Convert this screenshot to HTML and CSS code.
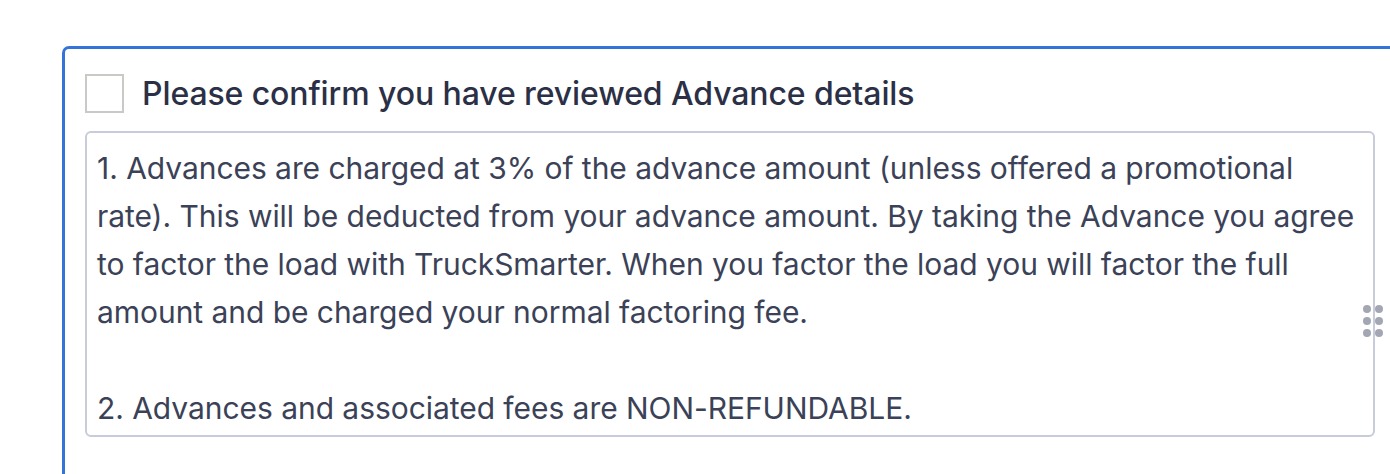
FILE: index.html
```html
<!DOCTYPE html>
<html lang="en">
<head>
    <meta charset="UTF-8">
    <title>Advance details</title>
    <link rel="stylesheet" href="styles.css">
</head>
<body>
<div class="card">
    <label class="confirm">
        <span class="check"></span>
        <span class="confirm-text">Please confirm you have reviewed Advance details</span>
    </label>
    <div class="terms">
        <p>1. Advances are charged at 3% of the advance amount (unless offered a promotional rate). This will be deducted from your advance amount. By taking the Advance you agree to factor the load with TruckSmarter. When you factor the load you will factor the full amount and be charged your normal factoring fee.</p>
        <p class="blank">&nbsp;</p>
        <p>2. Advances and associated fees are NON-REFUNDABLE.</p>
        <span class="grip">
            <i></i><i></i><i></i><i></i><i></i><i></i>
        </span>
    </div>
</div>
</body>
</html>
```

FILE: styles.css
```css
* {
    margin: 0;
    padding: 0;
    box-sizing: border-box;
}

html, body {
    width: 1390px;
    height: 474px;
    overflow: hidden;
    background: #fff;
}

body {
    font-family: Inter, "Noto Sans", sans-serif;
    padding: 46px 0 0 62px;
}

.card {
    width: 1340px;
    height: 428px;
    border: 3px solid #3474d8;
    border-right: none;
    border-bottom: none;
    border-radius: 7px 0 0 0;
    padding: 25px 0 0 20px;
}

.confirm {
    display: flex;
    align-items: center;
    gap: 18px;
    margin-bottom: 18px;
}

.check {
    width: 39px;
    height: 39px;
    border: 2px solid #c9c9c6;
    background: #fff;
    flex: none;
}

.confirm-text {
    font-size: 32px;
    font-weight: 500;
    color: #2b3046;
    letter-spacing: -0.1px;
}

.terms {
    position: relative;
    width: 1290px;
    height: 306px;
    border: 2px solid #c8cbd9;
    border-radius: 6px;
    padding: 11px 10px 0 10px;
    font-size: 30px;
    line-height: 48px;
    color: #3b4257;
    letter-spacing: -0.05px;
}

.grip {
    position: absolute;
    right: -10px;
    top: 172px;
    width: 20px;
    display: grid;
    grid-template-columns: 8px 8px;
    gap: 4px;
}

.grip i {
    width: 8px;
    height: 8px;
    border-radius: 50%;
    background: #a3a6b3;
}
```
